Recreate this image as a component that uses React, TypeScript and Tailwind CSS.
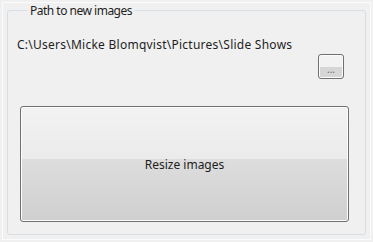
export default function App() {
  return (
    <div className="w-[373px] h-[242px] bg-[#f0f0f0] p-[2px] font-['Noto_Sans',sans-serif] text-[12px] leading-[15px] text-[#1e1e1e]">
      <div className="h-full border border-[#fbfbfb] px-[4px] pb-[4px]">
        <fieldset className="h-full border border-[#d5dfe5] rounded-[3px] pl-[9px] pr-[16px] pb-[12px] flex flex-col">
          <legend className="ml-[11px] px-[2px] mt-[1px] tracking-[-0.5px]">Path to new images</legend>
          <div className="mt-[19px] whitespace-nowrap tracking-[0.25px]">
            C:\Users\Micke Blomqvist\Pictures\Slide Shows
          </div>
          <div className="flex justify-end mt-[2px] pr-[5px]">
            <button className="w-[26px] h-[25px] rounded-[3px] border border-[#707070] bg-gradient-to-b from-[#f2f2f2] from-50% to-[#d6d6d6] to-50% text-[10px] leading-none text-[#666] pt-[5px] shadow-[inset_0_0_0_1px_#fcfcfc]">
              ...
            </button>
          </div>
          <button className="mt-[27px] ml-[3px] flex-1 rounded-[3px] border border-[#707070] shadow-[inset_0_0_0_1px_#fcfcfc] bg-[linear-gradient(to_bottom,#f2f2f2_0%,#ebebeb_46%,#dddddd_46%,#cfcfcf_100%)] flex items-center justify-center pt-[1px]">
            Resize images
          </button>
        </fieldset>
      </div>
    </div>
  );
}
